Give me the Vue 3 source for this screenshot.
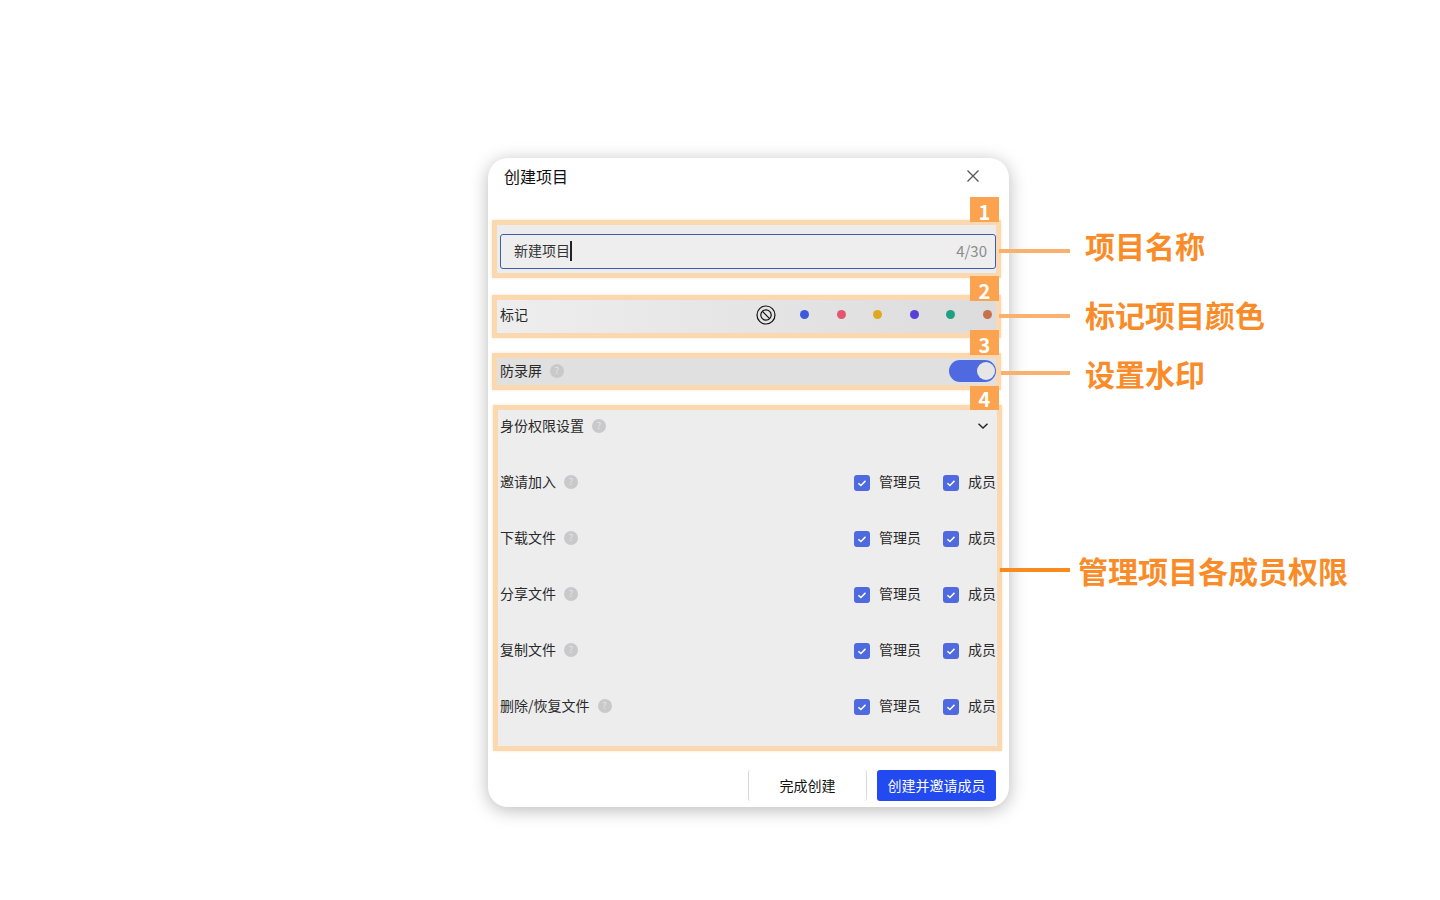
<template>
  <div class="page">
    <div class="dialog">
      <div class="dialog-head">
        <span class="dialog-title">创建项目</span>
        <svg class="close" width="14" height="14" viewBox="0 0 14 14">
          <path d="M1.5 1.5l11 11M12.5 1.5l-11 11" stroke="#555" stroke-width="1.3" fill="none" />
        </svg>
      </div>

      <section class="mark mark-name">
        <span class="tag">1</span>
        <div class="callout">
          <i class="line"></i>
          <span class="callout-text">项目名称</span>
        </div>
        <div class="name-input">
          <span class="name-value">新建项目</span>
          <i class="caret"></i>
          <span class="name-count">4/30</span>
        </div>
      </section>

      <section class="mark mark-color">
        <span class="tag">2</span>
        <div class="callout">
          <i class="line"></i>
          <span class="callout-text">标记项目颜色</span>
        </div>
        <span class="label">标记</span>
        <div class="colors">
          <svg class="no-color" width="20" height="20" viewBox="0 0 20 20">
            <circle cx="10" cy="10" r="9" fill="none" stroke="#111" stroke-width="1.2" />
            <circle cx="10" cy="10" r="5.2" fill="none" stroke="#111" stroke-width="1.2" />
            <path d="M6.4 6.4l7.2 7.2" stroke="#111" stroke-width="1.2" />
          </svg>
          <i v-for="c in colors" :key="c" class="dot" :style="{ background: c }"></i>
        </div>
      </section>

      <section class="mark mark-record">
        <span class="tag">3</span>
        <div class="callout">
          <i class="line"></i>
          <span class="callout-text">设置水印</span>
        </div>
        <span class="label">防录屏</span>
        <span class="help">?</span>
        <div class="switch"><i class="knob"></i></div>
      </section>

      <section class="mark mark-perm">
        <span class="tag">4</span>
        <div class="callout">
          <i class="line"></i>
          <span class="callout-text">管理项目各成员权限</span>
        </div>
        <div class="perm-row">
          <span class="label">身份权限设置</span>
          <span class="help">?</span>
          <svg class="chevron" width="12" height="8" viewBox="0 0 12 8">
            <path d="M1.5 1.8L6 6l4.5-4.2" stroke="#222" stroke-width="1.4" fill="none" />
          </svg>
        </div>
        <div v-for="p in perms" :key="p" class="perm-row">
          <span class="label">{{ p }}</span>
          <span class="help">?</span>
          <div class="checks">
            <label v-for="role in roles" :key="role" class="check">
              <svg width="16" height="16" viewBox="0 0 16 16">
                <rect width="16" height="16" rx="3" fill="#4f69e0" />
                <path d="M4.4 8.2l2.5 2.3 4.6-4.6" stroke="#fff" stroke-width="1.5" fill="none" />
              </svg>
              <span>{{ role }}</span>
            </label>
          </div>
        </div>
      </section>

      <div class="dialog-foot">
        <button class="btn btn-plain">完成创建</button>
        <button class="btn btn-primary">创建并邀请成员</button>
      </div>
    </div>
  </div>
</template>

<script setup>
const colors = ['#3b5bdb', '#e2566f', '#e0a820', '#5540d8', '#1fa083', '#c8704a']
const perms = ['邀请加入', '下载文件', '分享文件', '复制文件', '删除/恢复文件']
const roles = ['管理员', '成员']
</script>

<style>
body {
  background: #fff;
}
</style>

<style scoped>
.page {
  box-sizing: border-box;
  width: 1440px;
  height: 900px;
  padding: 158px 0 0 488px;
  overflow: hidden;
  font-family: "Noto Sans CJK SC", "Liberation Sans", sans-serif;
  font-size: 14px;
  color: #2a2a2a;
}

.dialog {
  box-sizing: border-box;
  display: flex;
  flex-direction: column;
  width: 521px;
  height: 649px;
  padding-left: 4px;
  border-radius: 20px;
  background: #fff;
  box-shadow: 0 3px 18px rgba(0, 0, 0, 0.28);
}

.dialog-head {
  box-sizing: border-box;
  display: flex;
  align-items: center;
  justify-content: space-between;
  height: 38px;
  padding: 0 29px 2px 12px;
  margin-bottom: 24px;
}

.dialog-title {
  font-size: 16px;
  line-height: 22px;
  color: #111;
}

.mark {
  position: relative;
  box-sizing: border-box;
  display: flex;
  align-items: center;
  width: 509px;
  padding-left: 3px;
  border: 5px solid #fcd8b0;
  box-shadow: 0 0 3px #fde4c8;
}

.label {
  margin-bottom: 2px;
  line-height: 20px;
  color: #2a2a2a;
}

.help {
  width: 14px;
  height: 14px;
  margin-left: 8px;
  border-radius: 50%;
  background: #c9c9cc;
  font-size: 9px;
  line-height: 14px;
  text-align: center;
  color: #e6e6e6;
}

.tag {
  position: absolute;
  right: -3px;
  width: 29px;
  height: 25px;
  background: #fba34e;
  font-size: 20px;
  font-weight: 700;
  line-height: 29px;
  text-align: center;
  color: #fff;
}

.callout {
  position: absolute;
  left: 100%;
  display: flex;
  align-items: flex-start;
  margin-left: 3px;
  white-space: nowrap;
}

.line {
  display: block;
  width: 71px;
  height: 4px;
  margin-right: 15px;
  background: #fbb06e;
}

.callout-text {
  font-size: 30px;
  font-weight: 700;
  line-height: 40px;
  color: #f98c28;
}

.mark-name {
  height: 58px;
  padding-top: 4px;
  background: #ececec;
}

.mark-name .tag {
  top: -28px;
}

.mark-name .callout {
  top: 0;
}

.mark-name .line {
  margin-top: 24px;
}

.name-input {
  box-sizing: border-box;
  display: flex;
  align-items: center;
  width: 100%;
  height: 35px;
  padding: 0 8px 0 13px;
  border: 1px solid #3f5cb0;
  border-radius: 3px;
  background: #eeeeef;
}

.name-value {
  margin-bottom: 2px;
  color: #333;
}

.caret {
  width: 2px;
  height: 20px;
  background: #222;
}

.name-count {
  margin-bottom: 1px;
  margin-left: auto;
  font-size: 15px;
  color: #8c8c8c;
}

.mark-color {
  justify-content: space-between;
  height: 43px;
  margin-top: 17px;
  padding-bottom: 4px;
  background: linear-gradient(90deg, #eeeeee, #dcdcdc);
}

.mark-color .label {
  margin-bottom: 1px;
}

.mark-color .tag {
  top: -24px;
}

.mark-color .callout {
  top: -6px;
}

.mark-color .line {
  margin-top: 20px;
}

.colors {
  display: flex;
  align-items: center;
  gap: 27.6px;
  padding-right: 4px;
}

.no-color {
  margin-right: -4px;
}

.dot {
  width: 9px;
  height: 9px;
  border-radius: 50%;
}

.mark-record {
  height: 37px;
  margin-top: 15px;
  padding-bottom: 2px;
  background: #e0e0e0;
}

.mark-record .tag {
  top: -28px;
}

.mark-record .callout {
  top: -5px;
  margin-left: 5px;
}

.mark-record .line {
  width: 69px;
  margin-top: 18px;
}

.switch {
  box-sizing: border-box;
  display: flex;
  align-items: center;
  justify-content: flex-end;
  width: 47px;
  height: 22px;
  padding-right: 1px;
  margin-left: auto;
  border-radius: 11px;
  background: #4f69e0;
}

.knob {
  width: 18px;
  height: 18px;
  border-radius: 50%;
  background: #e6e6e6;
}

.mark-perm {
  flex-direction: column;
  align-items: stretch;
  gap: 36px;
  height: 346px;
  margin: 15px 0 0 1px;
  padding: 6px 0 0 2px;
  background: #ededed;
}

.mark-perm .tag {
  top: -24px;
  right: -2px;
  height: 24px;
  line-height: 26px;
}

.mark-perm .callout {
  top: 140px;
  margin-left: 3px;
}

.mark-perm .line {
  width: 70px;
  margin-top: 18px;
  margin-right: 8px;
  background: #f98a1e;
}

.perm-row {
  display: flex;
  align-items: center;
  height: 20px;
}

.chevron {
  margin-left: auto;
  margin-right: 8px;
}

.checks {
  display: flex;
  gap: 22px;
  margin-left: auto;
  margin-right: 1px;
}

.check {
  display: flex;
  align-items: center;
  gap: 9px;
  line-height: 20px;
}

.check svg {
  margin-top: 1px;
}

.check span {
  margin-bottom: 2px;
}

.dialog-foot {
  display: flex;
  justify-content: flex-end;
  gap: 10px;
  margin-top: 19px;
  padding-right: 13px;
}

.btn {
  box-sizing: border-box;
  width: 119px;
  height: 31px;
  padding: 0 0 2px;
  border: none;
  border-radius: 3px;
  font-family: inherit;
  font-size: 14px;
}

.btn-plain {
  border-right: 1px solid #d8d8d8;
  border-left: 1px solid #d8d8d8;
  background: #fff;
  color: #111;
}

.btn-primary {
  background: #2349f0;
  color: #fff;
}
</style>
